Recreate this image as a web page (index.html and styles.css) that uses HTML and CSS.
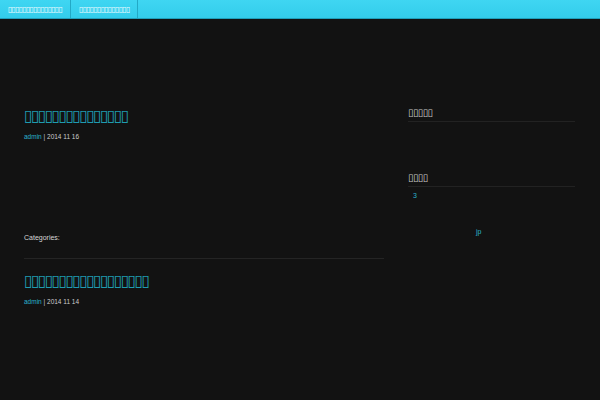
FILE: index.html
```html
<!DOCTYPE html>
<html>
<head>
<meta charset="utf-8">
<link rel="stylesheet" href="styles.css">
</head>
<body>
<nav class="topnav">
  <a class="nav-item" href="#">▯▯▯▯▯▯▯▯▯▯▯▯▯▯▯</a>
  <a class="nav-item" href="#">▯▯▯▯▯▯▯▯▯▯▯▯▯▯</a>
</nav>
<div class="wrap">
  <main class="content">
    <article class="post">
      <h2 class="post-title"><a href="#">▯▯▯▯▯▯▯▯▯▯▯▯▯▯▯</a></h2>
      <p class="meta"><a href="#">admin</a> | 2014 11 16</p>
      <p class="cats">Categories:</p>
    </article>
    <article class="post">
      <h2 class="post-title"><a href="#">▯▯▯▯▯▯▯▯▯▯▯▯▯▯▯▯▯▯</a></h2>
      <p class="meta"><a href="#">admin</a> | 2014 11 14</p>
    </article>
  </main>
  <aside class="sidebar">
    <section class="widget">
      <h3 class="widget-title">▯▯▯▯▯</h3>
    </section>
    <section class="widget widget-two">
      <h3 class="widget-title">▯▯▯▯</h3>
      <p class="count"><a href="#">3</a></p>
      <p class="jp"><a href="#">jp</a></p>
    </section>
  </aside>
</div>
</body>
</html>
```
FILE: styles.css
```css
* { box-sizing: border-box; }
html, body { margin: 0; padding: 0; }
body {
  background: #121212;
  font-family: "Liberation Sans", Arial, sans-serif;
  color: #d0d0d0;
  width: 600px;
  height: 400px;
  overflow: hidden;
}
a { text-decoration: none; }

.topnav {
  display: flex;
  height: 19px;
  background: linear-gradient(#3fd6f2, #33cdeb);
  border-bottom: 1px solid #1f9fbb;
}
.nav-item {
  display: flex;
  align-items: center;
  padding: 0 8px;
  border-right: 1px solid #23a9c6;
  color: #e8fbff;
  font-family: "DejaVu Sans", sans-serif;
  font-size: 8px;
  letter-spacing: -0.8px;
}

.wrap {
  display: flex;
  gap: 24px;
  padding: 0 25px 0 24px;
}
.content { width: 360px; padding-top: 88px; }
.sidebar { width: 167px; padding-top: 87px; }

.post-title {
  margin: 0;
  font-family: "DejaVu Sans", sans-serif;
  font-weight: normal;
  font-size: 16px;
  line-height: 18px;
  letter-spacing: -1.9px;
}
.post-title a { color: #1f9bb0; }
.meta {
  margin: 8px 0 0;
  font-size: 6.5px;
  color: #cccccc;
}
.meta a { color: #2ab3cc; }
.cats {
  margin: 94px 0 0;
  font-size: 7px;
  color: #d6d6d6;
  padding-bottom: 17px;
  border-bottom: 1px solid #242424;
}
.post + .post { margin-top: 13px; }

.widget-title {
  margin: 0;
  font-family: "DejaVu Sans", sans-serif;
  font-weight: normal;
  font-size: 10px;
  line-height: 14px;
  letter-spacing: -0.6px;
  color: #c8c8c8;
  padding: 0 0 1px 0;
  border-bottom: 1px solid #222;
}
.widget-two { margin-top: 49px; }
.count { margin: 5px 0 0 5px; font-size: 7px; }
.count a, .jp a { color: #2ab3cc; }
.jp { margin: 29px 0 0 68px; font-size: 7px; }
```
